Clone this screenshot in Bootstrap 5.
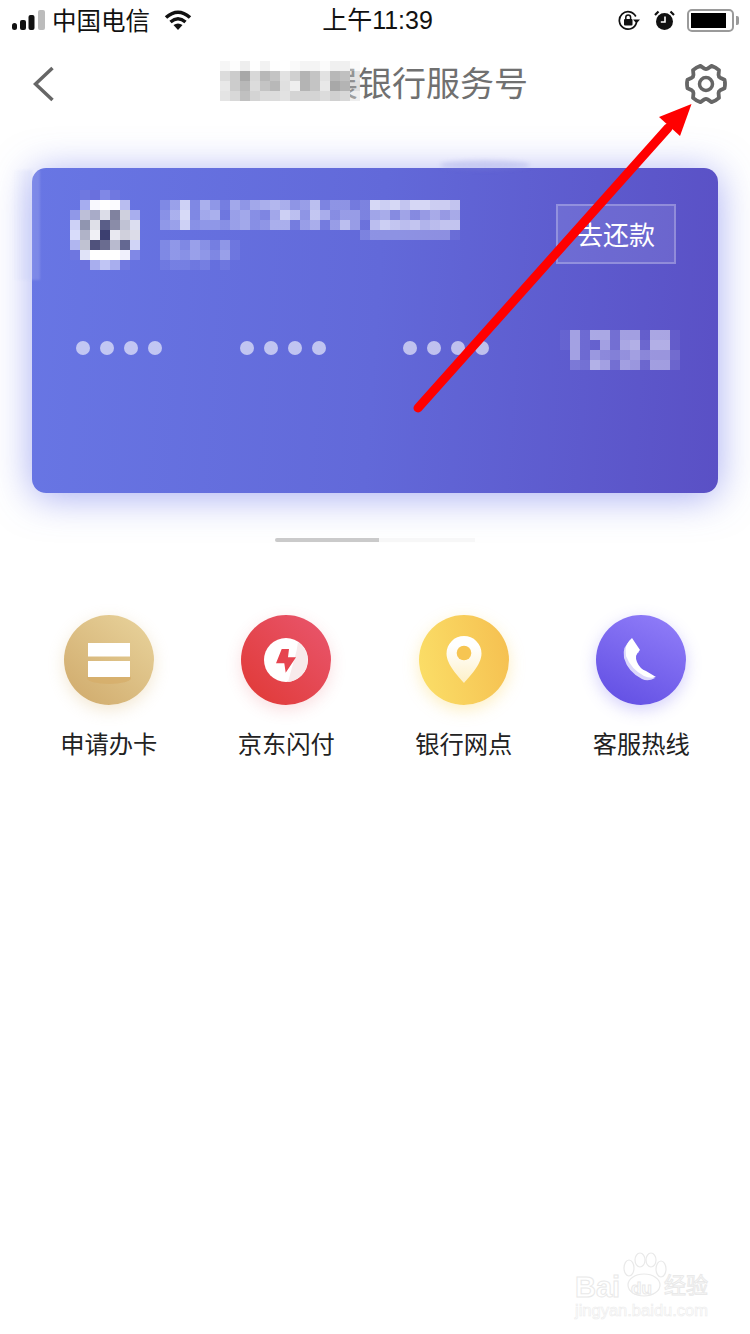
<!DOCTYPE html>
<html lang="zh-CN">

<head>
    <meta charset="UTF-8">
    <meta name="viewport" content="width=device-width, initial-scale=1.0">
    <title>银行服务号</title>
    <link href="https://cdn.jsdelivr.net/npm/bootstrap@5.3.3/dist/css/bootstrap.min.css" rel="stylesheet">
    <style>
        body {
            background: #fff;
            font-family: "Noto Sans CJK SC", "Liberation Sans", sans-serif;
            overflow: hidden;
        }

        .phone-page {
            width: 750px;
            height: 1334px;
            overflow: hidden;
        }

        .status-bar {
            height: 40px;
            color: #111;
        }

        .status-side {
            flex: 1 1 0;
        }

        .carrier {
            font-size: 24.500px;
            line-height: 1;
            margin-left: 6px;
            margin-right: 14px;
        }

        .clock {
            font-family: "Liberation Sans", "Noto Sans CJK SC", sans-serif;
            font-size: 25px;
            line-height: 1;
            margin-left: 4px;
        }

        .lock-icon {
            margin-right: 12px;
        }

        .battery-box {
            width: 47px;
            height: 23px;
            border: 2px solid #9a9a9a;
            border-radius: 5px;
            padding: 2px;
        }

        .battery-fill {
            width: 35px;
            height: 100%;
            background: #000;
        }

        .battery-nub {
            width: 3px;
            height: 9px;
            background: #9a9a9a;
            border-radius: 0 2px 2px 0;
            margin-left: 2px;
        }

        .top-nav {
            height: 88px;
            padding: 0 23px 0 33px;
        }

        .back-slot {
            width: 32px;
        }

        .nav-title {
            width: 306px;
            margin-bottom: 4px;
            font-size: 34px;
            line-height: 44px;
            color: #707070;
            text-align: right;
        }

        .title-blur {
            position: absolute;
            left: -2px;
            top: 1px;
        }

        .bank-card {
            height: 325px;
            margin: 40px 32px 0;
            padding: 22px 42px 0 38px;
            border-radius: 14px;
            background: linear-gradient(94deg, #6876e4 0%, #6269d9 50%, #5a50c5 100%);
            box-shadow: 0 4px 38px rgba(92, 104, 232, .55);
        }

        .card-spill {
            position: absolute;
            left: -20px;
            top: 2px;
            width: 28px;
            height: 110px;
            background: linear-gradient(90deg, rgba(200, 206, 247, 0), rgba(200, 206, 247, .3) 72%, rgba(255, 255, 255, .14) 74%);
            filter: blur(1px);
        }

        .card-bump {
            position: absolute;
            left: 408px;
            top: -8px;
            width: 90px;
            height: 10px;
            border-radius: 50%;
            background: rgba(130, 135, 220, .25);
            filter: blur(2px);
        }

        .name-blur {
            margin-left: 20px;
            margin-top: 10px;
        }

        .repay-btn {
            width: 120px;
            height: 60px;
            margin-top: 14px;
            padding: 0;
            font-size: 26px;
            line-height: 1;
            color: #fff;
            background: rgba(255, 255, 255, .1);
            border: 2px solid rgba(255, 255, 255, .25);
            border-radius: 0;
        }

        .card-number {
            margin-top: 60px;
            margin-left: 6px;
            height: 40px;
        }

        .dot-group {
            width: 86px;
            margin-right: 77.5px;
            margin-bottom: 4px;
            gap: 10px;
        }

        .dot-group:nth-child(3) {
            margin-right: 71px;
        }

        .num-dot {
            width: 14px;
            height: 14px;
            border-radius: 50%;
            background: rgba(255, 255, 255, .6);
        }

        .scroll-track {
            width: 200px;
            height: 4px;
            margin: 45px auto 0;
            background: #f8f8f8;
            border-radius: 2px 0 0 2px;
        }

        .scroll-track .progress-bar {
            background: #cbcbcb;
        }

        .service-row {
            margin-top: 73px;
            padding: 0 20px;
        }

        .service-icon {
            width: 90px;
            height: 90px;
            border-radius: 50%;
            display: block;
            margin: 0 auto;
        }

        .icon-gold {
            background: linear-gradient(40deg, #cfa96a, #e9d49d);
            box-shadow: 0 5px 16px rgba(214, 178, 110, .3);
        }

        .icon-red {
            background: linear-gradient(45deg, #e03834, #e9576f);
            box-shadow: 0 5px 16px rgba(228, 70, 84, .18);
        }

        .icon-yellow {
            background: linear-gradient(80deg, #fbdf68, #f5bf50);
            box-shadow: 0 5px 16px rgba(250, 210, 90, .36);
        }

        .icon-purple {
            background: linear-gradient(25deg, #5f4ce2, #9380fa);
            box-shadow: 0 5px 16px rgba(105, 90, 240, .28);
        }

        .service-label {
            margin-top: 21px;
            font-size: 24.300px;
            line-height: 34px;
            color: #222;
        }

        .red-arrow {
            position: absolute;
            left: 0;
            top: 0;
            pointer-events: none;
        }

        .watermark {
            position: absolute;
            left: 574px;
            top: 1252px;
            width: 140px;
            height: 66px;
        }

        .wm-text {
            position: absolute;
            color: #fff;
            -webkit-text-stroke: 1px #e9e9e9;
            line-height: 1;
            white-space: nowrap;
        }

        .wm-bai {
            left: 1px;
            top: 19px;
            font: bold 29px "Liberation Sans", sans-serif;
        }

        .wm-du {
            left: 57px;
            top: 27px;
            font: bold 17px "Liberation Sans", sans-serif;
        }

        .wm-jy {
            left: 90px;
            top: 20px;
            font-size: 22px;
        }

        .wm-url {
            left: 1px;
            top: 49px;
            font: 16.500px "Liberation Sans", sans-serif;
            -webkit-text-stroke: .6px #ececec;
        }
    </style>
</head>

<body>
    <div class="phone-page position-relative">

        <!-- status bar -->
        <div class="status-bar d-flex align-items-center">
            <div class="status-side d-flex align-items-center" style="padding-left:12px">
                <svg width="34" height="21" viewBox="0 0 34 21">
                    <rect x="0" y="13" width="5" height="7" rx="2.500" fill="#111" />
                    <rect x="8" y="10" width="6" height="10" rx="2" fill="#111" />
                    <rect x="16.500" y="5" width="6" height="15" rx="2" fill="#111" />
                    <rect x="26" y="0" width="7" height="20" rx="2" fill="#bcbcbc" />
                </svg>
                <span class="carrier">中国电信</span>
                <svg width="28" height="21" viewBox="0 0 28 21">
                    <path d="M2 7.500Q14-3 26 7.500" fill="none" stroke="#111" stroke-width="3.600" />
                    <path d="M6.500 12Q14 5.500 21.500 12" fill="none" stroke="#111" stroke-width="3.400" />
                    <path d="M9.500 15Q14 12 18.500 15L14 20Z" fill="#111" />
                </svg>
            </div>
            <div class="clock">上午11:39</div>
            <div class="status-side d-flex align-items-center justify-content-end" style="padding-right:11px">
                <svg width="24" height="22" viewBox="0 0 24 22" class="lock-icon">
                    <path d="M17.800 7.500A8.700 8.700 0 1 0 18.500 13.500" fill="none" stroke="#111" stroke-width="1.700" />
                    <path d="M15 10.500h7l-3.500 4z" fill="#111" />
                    <rect x="6" y="10" width="8.500" height="6.500" rx="1" fill="#111" />
                    <path d="M7.800 10V8.300a2.400 2.400 0 0 1 4.800 0V10" fill="none" stroke="#111" stroke-width="1.500" />
                </svg>
                <svg width="21" height="21" viewBox="0 0 21 21" class="me-2">
                    <circle cx="10.500" cy="11.500" r="8.500" fill="#111" />
                    <path d="M11 6.500V12H6.800" fill="none" stroke="#fff" stroke-width="1.600" />
                    <path d="M1 5L4.500 1.500M20 5L16.500 1.500" stroke="#111" stroke-width="2.200" />
                </svg>
                <div class="d-flex align-items-center ms-1">
                    <div class="battery-box">
                        <div class="battery-fill"></div>
                    </div>
                    <div class="battery-nub"></div>
                </div>
            </div>
        </div>

        <!-- title bar -->
        <div class="top-nav d-flex align-items-center justify-content-between">
            <div class="back-slot">
                <svg width="22" height="36" viewBox="0 0 22 36" class="d-block">
                    <path d="M19.500 2L2.500 18l17 16" fill="none" stroke="#666" stroke-width="3.500" />
                </svg>
            </div>
            <div class="nav-title position-relative">展银行服务号
                <svg id="titleBlur" class="title-blur d-block" width="140" height="40"></svg>
            </div>
            <svg width="42" height="42" viewBox="0 0 42 42" class="d-block">
                <path id="gearPath" fill="none" stroke="#666" stroke-width="3.800" stroke-linejoin="round" />
                <circle cx="21" cy="21" r="6.500" fill="none" stroke="#666" stroke-width="3.500" />
            </svg>
        </div>

        <!-- bank card -->
        <div class="card bank-card border-0 position-relative">
            <div class="card-spill"></div>
            <div class="card-bump"></div>
            <div class="d-flex align-items-start">
                <svg id="avatarBlur" width="70" height="80" class="d-block flex-shrink-0"></svg>
                <svg id="nameBlur" width="300" height="70" class="name-blur d-block flex-shrink-0"></svg>
                <button type="button" class="btn repay-btn ms-auto">去还款</button>
            </div>
            <div class="card-number d-flex align-items-center">
                <div class="dot-group d-flex"><span class="num-dot"></span><span class="num-dot"></span><span class="num-dot"></span><span class="num-dot"></span></div>
                <div class="dot-group d-flex"><span class="num-dot"></span><span class="num-dot"></span><span class="num-dot"></span><span class="num-dot"></span></div>
                <div class="dot-group d-flex"><span class="num-dot"></span><span class="num-dot"></span><span class="num-dot"></span><span class="num-dot"></span></div>
                <svg id="numberBlur" width="120" height="40" class="d-block flex-shrink-0"></svg>
            </div>
        </div>

        <div class="progress scroll-track">
            <div class="progress-bar" style="width:52%"></div>
        </div>

        <!-- services -->
        <div class="row g-0 service-row text-center">
            <div class="col-3">
                <svg class="service-icon icon-gold" viewBox="0 0 90 90">
                    <ellipse cx="45" cy="63" rx="22" ry="6" fill="#d5ad68" opacity=".7" />
                    <rect x="24" y="28" width="42" height="13.500" fill="#fff" />
                    <rect x="24" y="46" width="42" height="16" fill="#fff" />
                </svg>
                <div class="service-label">申请办卡</div>
            </div>
            <div class="col-3">
                <svg class="service-icon icon-red" viewBox="0 0 90 90">
                    <circle cx="45" cy="45" r="22" fill="#fff" />
                    <path d="M57 27L55.500 36L47 67A22 22 0 0 0 57 27Z" fill="#f8eaeb" />
                    <path d="M40.700 34H48L47 42.300H55L44.700 57.700L43.300 48.300H35Z" fill="#e6444f" />
                </svg>
                <div class="service-label">京东闪付</div>
            </div>
            <div class="col-3">
                <svg class="service-icon icon-yellow" viewBox="0 0 90 90">
                    <defs>
                        <linearGradient id="pinFill" x1="0" y1="0" x2="0" y2="1">
                            <stop offset=".2" stop-color="#fff" />
                            <stop offset="1" stop-color="#fdf0c8" />
                        </linearGradient>
                    </defs>
                    <path d="M45 68C40 62 27.500 50 27.500 38.500A17.500 17.500 0 0 1 62.500 38.500C62.500 50 50 62 45 68Z" fill="url(#pinFill)" />
                    <circle cx="45" cy="38" r="7.300" fill="#f6c552" />
                </svg>
                <div class="service-label">银行网点</div>
            </div>
            <div class="col-3">
                <svg class="service-icon icon-purple" viewBox="0 0 90 90">
                    <path d="M35 25L43 37Q37 41 40 48Q43 55 50 58L59 63Q52 67 46 64Q32 57 28 43Q26 31 35 25Z" fill="#dcd8fb" />
                    <path d="M36 23L44 35Q38 40 41 47Q44 54 50 56L60 62Q54 64 48 61Q35 54 30 41Q28 29 36 23Z" fill="#fff" />
                </svg>
                <div class="service-label">客服热线</div>
            </div>
        </div>

        <!-- annotation drawn on top of the screenshot -->
        <svg class="red-arrow" width="750" height="1334" viewBox="0 0 750 1334">
            <path d="M418 408L668 128" stroke="#f00" stroke-width="9" stroke-linecap="round" fill="none" />
            <path d="M691.500 104L659 117L680 136Z" fill="#f00" />
        </svg>

        <!-- baidu jingyan watermark -->
        <div class="watermark">
            <span class="wm-text wm-bai">Bai</span>
            <svg width="52" height="46" viewBox="0 0 52 46" class="position-absolute" style="left:46px;top:0">
                <g fill="#fff" stroke="#e9e9e9" stroke-width="1.200">
                    <ellipse cx="9" cy="16" rx="5" ry="8" />
                    <ellipse cx="20" cy="8" rx="5" ry="7" />
                    <ellipse cx="31" cy="8" rx="5" ry="7" />
                    <ellipse cx="41" cy="17" rx="5" ry="8" />
                    <ellipse cx="24" cy="33" rx="16" ry="11" />
                </g>
            </svg>
            <span class="wm-text wm-du">du</span>
            <span class="wm-text wm-jy">经验</span>
            <span class="wm-text wm-url">jingyan.baidu.com</span>
        </div>
    </div>

    <script src="https://cdn.jsdelivr.net/npm/bootstrap@5.3.3/dist/js/bootstrap.bundle.min.js"></script>

    <script>
        const NS = 'http://www.w3.org/2000/svg';

        // rows of cells, each cell a css colour or "-" for nothing
        function paintCells(id, rows, cell) {
            const svg = document.getElementById(id);
            rows.forEach((row, y) => {
                row.forEach((colour, x) => {
                    if (colour === '-') return;
                    const r = document.createElementNS(NS, 'rect');
                    r.setAttribute('x', x * cell);
                    r.setAttribute('y', y * cell);
                    r.setAttribute('width', cell);
                    r.setAttribute('height', cell);
                    r.setAttribute('fill', colour);
                    svg.appendChild(r);
                });
            });
        }

        // hex digit = how much white lies over the card
        function whiteRows(rows, strength) {
            return rows.map(row => row.split('').map(d => {
                if (d === '.') return '-';
                return 'rgba(255,255,255,' + (parseInt(d, 16) / 15 * strength).toFixed(2) + ')';
            }));
        }

        paintCells('avatarBlur', [
            ['-', '#6f78e0', '#6a70dd', '#8088e6', '#7078e0', '-', '-'],
            ['-', '#a6adf0', '#f8f8fe', '#ffffff', '#fbfbff', '#b9bdf0', '-'],
            ['#9098e8', '#bdbfd8', '#a8abc8', '#dcdde8', '#80829f', '#cfd0de', '#a8aeee'],
            ['#cdd1f6', '#9095b0', '#dfe0e8', '#5a5e88', '#8a8ca8', '#c0c2d4', '#dcdef0'],
            ['#d8dcfa', '#b0b3c8', '#f0f0f5', '#3c3f70', '#e8e8f0', '#d0d0dc', '#dcdce8'],
            ['#b0b6f0', '#c0c2d2', '#50527c', '#6a6c90', '#b8bace', '#646892', '#d0d4f6'],
            ['#6e76e0', '#e0e3f8', '#ffffff', '#ffffff', '#ffffff', '#f0f0fc', '#8088e6'],
            ['-', '#6c72de', '#a8aeee', '#c0c5f4', '#a8aeee', '#7078e0', '-']
        ], 10);

        paintCells('nameBlur', whiteRows([
            '36c385275789856a35523dcdbddccb',
            '48d378167437ca5b846637847468688',
            '56c455467458826826a61acbab9abbd',
            '....................3555555551',
            '35364251',
            '35465361',
            '12212010'
        ], .85), 10);

        paintCells('numberBlur', whiteRows([
            '192aa3991aa1',
            '19219 3ab2bb1'.replace(' ', ''),
            '.92865796883',
            '.43b93982992'
        ], .72), 10);

        const titleGreys = [
            'f6 fd ee fe f2 fe ff fa f4 f4 fb f0 f0',
            'dc cc a8 d8 b8 c4 e2 d0 b4 c4 e2 b8 c0',
            'e8 cc b8 dc c4 b8 e0 ee b4 c4 e8 a8 b4',
            'e4 d8 c0 d4 dc dc e2 d4 d4 d4 dc d0 d8'
        ];
        const titleFade = ['#f4f4f470', '#c0c0c070', '#b4b4b470', '#d8d8d870'];
        paintCells('titleBlur', titleGreys.map((row, i) =>
            row.split(' ').map(g => '#' + g + g + g).concat(titleFade[i])), 10);

        // gear outline: six rounded teeth joined by notches
        function gearOutline(cx, cy, outer, valley) {
            const pt = (r, deg) => {
                const a = deg * Math.PI / 180;
                return (cx + r * Math.cos(a)).toFixed(2) + ' ' + (cy + r * Math.sin(a)).toFixed(2);
            };
            let d = 'M' + pt(outer, -13);
            for (let k = 0; k < 6; k++) {
                const a = k * 60;
                d += 'A' + outer + ' ' + outer + ' 0 0 1 ' + pt(outer, a + 13);
                d += 'L' + pt(valley, a + 24) + 'Q' + pt(valley - 1, a + 30) + ' ' + pt(valley, a + 36);
                d += 'L' + pt(outer, a + 47);
            }
            return d + 'Z';
        }
        document.getElementById('gearPath').setAttribute('d', gearOutline(21, 21, 19, 15.5));
    </script>
</body>

</html>
